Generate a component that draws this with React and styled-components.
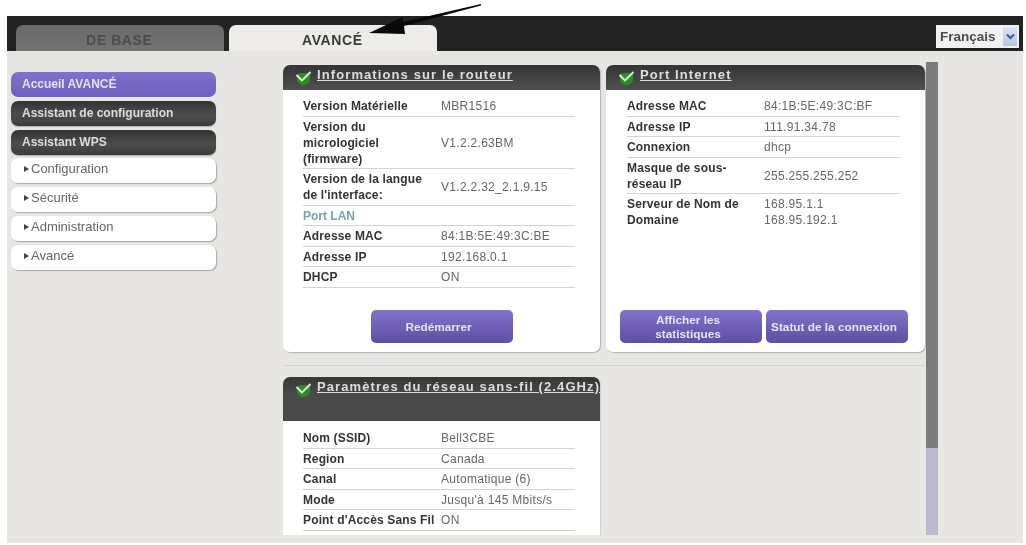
import React from "react";
import styled, { createGlobalStyle } from "styled-components";

const Global = createGlobalStyle`
  html, body { margin: 0; padding: 0; background: #fff; }
  body { width: 1026px; height: 545px; overflow: hidden; font-family: "Liberation Sans", Arial, sans-serif; }
`;

const Page = styled.div`
  position: relative;
  width: 1026px;
  height: 545px;
  box-sizing: border-box;
  padding: 16px 3px 0 7px;
  filter: blur(0.6px);
`;

const TopBar = styled.div`
  display: flex;
  align-items: flex-end;
  gap: 5px;
  height: 35px;
  padding: 0 4px 0 9px;
  background: #232323;
`;

const Tab = styled.div`
  width: 208px;
  height: 26px;
  border-radius: 7px 7px 0 0;
  box-sizing: border-box;
  font-size: 14px;
  font-weight: bold;
  letter-spacing: 0.6px;
  line-height: 30px;
  background: ${(p) => (p.$active ? "#eeece9" : "linear-gradient(#6a6a6a, #737373)")};
  color: ${(p) => (p.$active ? "#3a3a3a" : "#4c4c4c")};
  padding-left: ${(p) => (p.$active ? "73px" : "70px")};
`;

const LangSelect = styled.div`
  display: flex;
  align-items: center;
  justify-content: space-between;
  align-self: flex-start;
  margin: 9px 0 0 auto;
  width: 83px;
  height: 23px;
  box-sizing: border-box;
  padding: 0 2px 0 4px;
  background: #f1f1f3;
  color: #4a4a4a;
  font-size: 13.5px;
  font-weight: bold;
`;

const LangArrow = styled.span`
  display: flex;
  align-items: center;
  justify-content: center;
  width: 14px;
  height: 19px;
  background: linear-gradient(#dbe4f5, #b4c6e8);
`;

const Main = styled.div`
  display: flex;
  height: 492px;
  background: #e8e6e3;
`;

const Sidebar = styled.nav`
  display: flex;
  flex-direction: column;
  gap: 3.8px;
  width: 276px;
  box-sizing: border-box;
  padding: 21px 0 0 4px;
`;

const navLook = {
  primary: `
    background: linear-gradient(#8071cb, #6f5fc0);
    color: #e4e0f4;
    font-weight: bold;
    padding-left: 11px;
    box-shadow: 0 1px 1px #f7f6fb;
  `,
  dark: `
    background: linear-gradient(#333, #4d4d4d 55%, #3b3b3b);
    color: #dcdcdc;
    font-weight: bold;
    padding-left: 11px;
    box-shadow: 0 1px 1px #b0b0b0;
  `,
  plain: `
    background: #fff;
    color: #666;
    font-size: 13px;
    line-height: 21px;
    padding-left: 13px;
    box-shadow: 1px 1px 1px #a8a8a8;
  `,
};

const NavItem = styled.div`
  width: 205px;
  height: 25px;
  box-sizing: border-box;
  border-radius: 7px;
  font-size: 12px;
  line-height: 24px;
  white-space: nowrap;
  ${(p) => navLook[p.$kind]}
`;

const Caret = styled.span`
  display: inline-block;
  width: 0;
  height: 0;
  margin-right: 2px;
  vertical-align: 1px;
  border-left: 5px solid #444;
  border-top: 3px solid transparent;
  border-bottom: 3px solid transparent;
`;

const Content = styled.div`
  width: 642px;
  padding-top: 14px;
`;

const CardRow = styled.div`
  display: grid;
  grid-template-columns: 317px 319px;
  gap: 6px;
`;

const Card = styled.section`
  display: flex;
  flex-direction: column;
  width: 317px;
  height: ${(p) => p.$height}px;
  background: #fff;
  border-radius: ${(p) => (p.$open ? "7px 7px 0 0" : "7px")};
  box-shadow: ${(p) => (p.$open ? "1px 0 0 #d2d2d2" : "1px 1px 1px #b4b4b4")};
  overflow: hidden;
  ${(p) => p.$wide && "width: 319px;"}
`;

const CardHeader = styled.header`
  display: flex;
  align-items: flex-start;
  flex: none;
  gap: 5px;
  height: ${(p) => p.$height || 25}px;
  box-sizing: border-box;
  padding: 2px 0 0 12px;
  background: ${(p) => (p.$height ? "linear-gradient(#363636, #4a4a4a 40%)" : "linear-gradient(#343434, #505050)")};
`;

const Title = styled.a`
  color: #dedede;
  font-size: 13px;
  font-weight: bold;
  line-height: 15px;
  letter-spacing: 1.1px;
  text-decoration: underline;
  white-space: nowrap;
`;

const Rows = styled.div`
  padding: ${(p) => (p.$top || 6)}px ${(p) => (p.$wide ? "25px 0 21px" : "25px 0 20px")};
`;

const Row = styled.div`
  display: grid;
  grid-template-columns: ${(p) => p.$label || 138}px 1fr;
  align-items: center;
  padding: 2px 0 1.5px;
  border-bottom: ${(p) => (p.$bare ? "1px solid transparent" : "1px solid #d4d4d4")};
  font-size: 12px;
  line-height: 16px;
`;

const Label = styled.div`
  color: #333;
  font-weight: bold;
  letter-spacing: 0.15px;
  padding-right: 6px;
  white-space: nowrap;
`;

const Value = styled.div`
  color: #666;
  letter-spacing: 0.3px;
`;

const SectionLabel = styled.div`
  color: #6fa8a4;
  font-weight: bold;
  grid-column: 1 / 3;
`;

const Actions = styled.div`
  display: flex;
  justify-content: ${(p) => (p.$center ? "center" : "flex-start")};
  gap: 4px;
  margin-top: auto;
  padding: 0 14px 9px;
`;

const ActionButton = styled.button`
  width: 142px;
  height: 33px;
  padding: 0 6px 0 0;
  border: 0;
  border-radius: 5px;
  background: linear-gradient(#8272c9, #5f4fa3);
  color: #e6e3f3;
  font-family: inherit;
  font-size: 11.8px;
  font-weight: bold;
  line-height: 14px;
`;

const Divider = styled.div`
  height: 1px;
  margin: 13px 0 11px;
  background: #d2d2cf;
`;

const Scrollbar = styled.div`
  flex: none;
  width: 12px;
  height: 473px;
  margin: 11px 0 0 1px;
  background: #bdb8d2;
`;

const ScrollThumb = styled.div`
  height: 386px;
  background: #7b7b7b;
`;

const ArrowMark = styled.svg`
  position: absolute;
  left: 360px;
  top: 0;
`;

const CheckIcon = () => (
  <svg width="17" height="17" viewBox="0 0 17 17" style={{ flex: "none", marginTop: 2 }}>
    <path d="M2 5 Q8.5 3 15 5 V10.5 Q15 14.5 8.5 16.5 Q2 14.5 2 10.5 Z" fill="#2c8c2c" />
    <path d="M1.5 6 L7 11.5 L15.5 3" fill="none" stroke="#d8efd0" strokeWidth="1.9" />
  </svg>
);

const Info = ({ label, value, bare, labelWidth }) => (
  <Row $bare={bare} $label={labelWidth}>
    <Label>{label}</Label>
    <Value>{value}</Value>
  </Row>
);

const nl = (a, b, c) => (
  <>
    {a}
    <br />
    {b}
    {c && <br />}
    {c}
  </>
);

const navItems = [
  ["primary", "Accueil AVANCÉ"],
  ["dark", "Assistant de configuration"],
  ["dark", "Assistant WPS"],
  ["plain", "Configuration"],
  ["plain", "Sécurité"],
  ["plain", "Administration"],
  ["plain", "Avancé"],
];

export default function App() {
  return (
    <Page>
      <Global />
      <TopBar>
        <Tab>DE BASE</Tab>
        <Tab $active>AVANCÉ</Tab>
        <LangSelect>
          Français
          <LangArrow>
            <svg width="9" height="7" viewBox="0 0 9 7">
              <path d="M1 1.5 L4.5 5 L8 1.5" fill="none" stroke="#3d5a94" strokeWidth="2" />
            </svg>
          </LangArrow>
        </LangSelect>
      </TopBar>
      <Main>
        <Sidebar>
          {navItems.map(([kind, text]) => (
            <NavItem key={text} $kind={kind}>
              {kind === "plain" && <Caret />}
              {text}
            </NavItem>
          ))}
        </Sidebar>
        <Content>
          <CardRow>
            <Card $height={287}>
              <CardHeader>
                <CheckIcon />
                <Title>Informations sur le routeur</Title>
              </CardHeader>
              <Rows>
                <Info label="Version Matérielle" value="MBR1516" />
                <Info label={nl("Version du", "micrologiciel", "(firmware)")} value="V1.2.2.63BM" />
                <Info label={nl("Version de la langue", "de l'interface:")} value="V1.2.2.32_2.1.9.15" />
                <Row>
                  <SectionLabel>Port LAN</SectionLabel>
                </Row>
                <Info label="Adresse MAC" value="84:1B:5E:49:3C:BE" />
                <Info label="Adresse IP" value="192.168.0.1" />
                <Info label="DHCP" value="ON" />
              </Rows>
              <Actions $center>
                <ActionButton>Redémarrer</ActionButton>
              </Actions>
            </Card>
            <Card $height={287} $wide>
              <CardHeader>
                <CheckIcon />
                <Title>Port Internet</Title>
              </CardHeader>
              <Rows $wide>
                <Info labelWidth={137} label="Adresse MAC" value="84:1B:5E:49:3C:BF" />
                <Info labelWidth={137} label="Adresse IP" value="111.91.34.78" />
                <Info labelWidth={137} label="Connexion" value="dhcp" />
                <Info labelWidth={137} label={nl("Masque de sous-", "réseau IP")} value="255.255.255.252" />
                <Info
                  bare
                  labelWidth={137}
                  label={nl("Serveur de Nom de", "Domaine")}
                  value={nl("168.95.1.1", "168.95.192.1")}
                />
              </Rows>
              <Actions>
                <ActionButton>{nl("Afficher les", "statistiques")}</ActionButton>
                <ActionButton>Statut de la connexion</ActionButton>
              </Actions>
            </Card>
          </CardRow>
          <Divider />
          <Card $height={158} $open>
            <CardHeader $height={44}>
              <CheckIcon />
              <Title>Paramètres du réseau sans-fil (2.4GHz)</Title>
            </CardHeader>
            <Rows $top={7}>
              <Info label="Nom (SSID)" value="Bell3CBE" />
              <Info label="Region" value="Canada" />
              <Info label="Canal" value="Automatique (6)" />
              <Info label="Mode" value="Jusqu'à 145 Mbits/s" />
              <Info label="Point d'Accès Sans Fil" value="ON" />
            </Rows>
          </Card>
        </Content>
        <Scrollbar>
          <ScrollThumb />
        </Scrollbar>
      </Main>
      <ArrowMark width="125" height="40" viewBox="0 0 125 40">
        <path d="M9 33 L43 17 L43 22 L121 4 L121 5.5 L44 26 L45 34 Z" fill="#0a0a0a" />
      </ArrowMark>
    </Page>
  );
}
